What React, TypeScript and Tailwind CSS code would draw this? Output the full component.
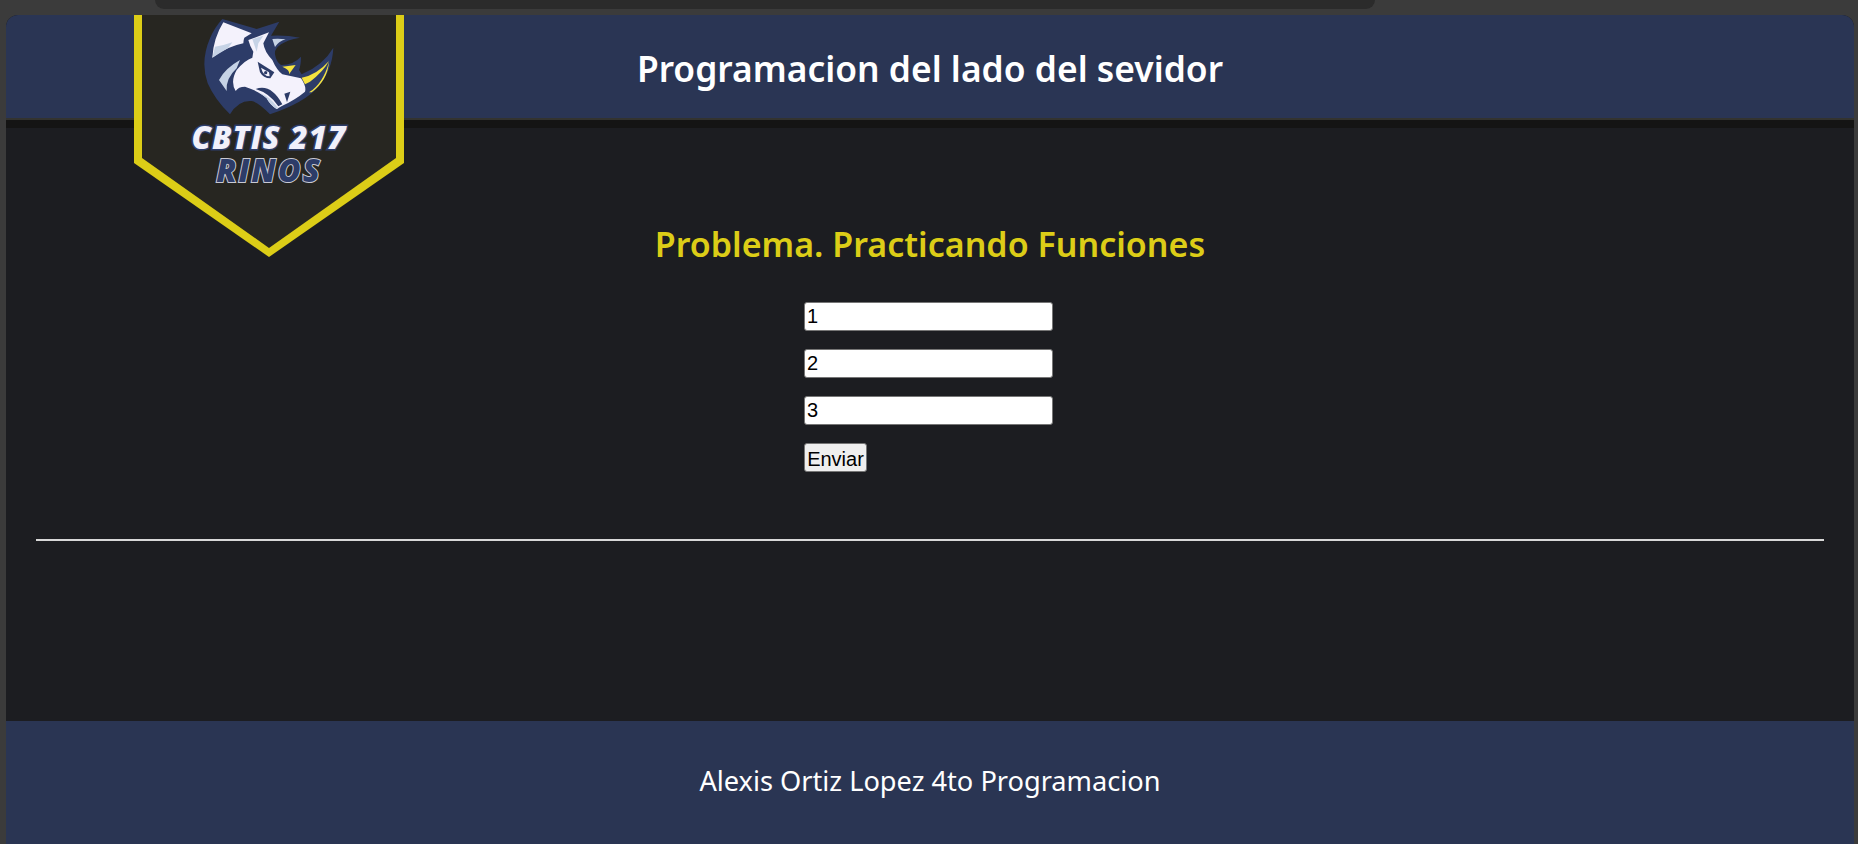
import React from 'react';

const titleFont = "font-['Noto_Sans',sans-serif]";

function Rhino() {
  return (
    <svg viewBox="0 0 450 315" className="absolute left-[61px] top-0 w-[150px] h-[105px]">
      <path
        fill="#2d3c68"
        d="M82 12 L185 42 L253 20 L228 62 Q275 60 315 68 Q275 75 258 88 Q238 100 240 118 Q244 142 258 150 Q295 150 318 125 Q318 150 312 165 L320 178 Q385 150 415 98 Q412 165 370 215 Q330 262 225 298 Q190 262 170 258 Q130 255 105 298 Q60 255 38 205 Q15 140 45 70 Q58 38 82 12 Z"
      />
      {/* crest */}
      <path fill="#f4f2fc" d="M85 22 L170 55 L148 68 Q145 75 145 85 Q95 95 52 128 Q55 70 85 22 Z" />
      <path fill="#c6d3e6" d="M52 128 L60 95 Q85 92 112 82 L100 98 Z" />
      {/* face */}
      <path
        fill="#f4f2fc"
        d="M160 75 L222 52 L205 85 Q208 110 232 135 Q245 165 262 178 L318 190 Q335 215 330 230 Q300 255 262 272 L245 282 Q225 270 215 250 Q195 230 150 215 Q130 215 122 228 Q105 200 125 165 Q150 135 172 128 L175 110 Q165 95 160 75 Z"
      />
      <path fill="#c6d3e6" d="M172 72 L205 62 L190 85 L185 110 Q178 90 172 72 Z" />
      <path fill="#c6d3e6" d="M135 135 Q90 160 72 195 L95 228 Q92 190 125 160 Z" />
      <path fill="#c6d3e6" d="M232 72 Q252 70 272 73 Q250 80 240 96 Z" />
      <path fill="#c6d3e6" d="M190 232 Q215 240 235 262 L250 280 L245 282 Q225 270 215 250 Q204 240 190 232 Z" />
      <path fill="#2d3c68" d="M182 222 Q228 205 262 268 L250 274 Q225 235 182 222 Z" />
      {/* small horn + big horn */}
      <path fill="#f5e33f" d="M262 155 L302 150 L282 178 Q286 165 262 155 Z" />
      <path fill="#f5e33f" d="M320 188 Q365 180 402 138 Q385 170 345 200 L330 208 Z" />
      <path fill="#f5e33f" d="M342 232 Q385 205 402 140 Q398 195 350 232 Z" />
      {/* eye */}
      <path fill="#2d3c68" d="M188 140 L238 172 L226 190 Q205 190 195 172 Z" />
      <path fill="#f4f2fc" d="M198 158 L222 172 L224 184 Q205 184 198 158 Z" />
      <circle cx="212" cy="173" r="5" fill="#2d3c68" />
      {/* nostril */}
      <path fill="#2d3c68" d="M268 236 L286 230 L276 262 Z" />
    </svg>
  );
}

function Logo() {
  return (
    <div className="absolute left-[128px] top-0 w-[270px] h-[242px]">
      <svg viewBox="0 0 270 242" className="absolute inset-0 w-[270px] h-[242px]">
        <polygon fill="#dccd17" points="0,0 270,0 270,148 135,242 0,148" />
        <polygon fill="#272621" points="8,0 262,0 262,143 135,233 8,143" />
      </svg>
      <Rhino />
      <div className="absolute left-0 top-[109px] w-full text-center font-['Open_Sans',sans-serif] italic font-extrabold text-[31px] leading-[26px] tracking-[1px] text-[#f1f0fa] [-webkit-text-stroke:3px_#2d3c68] [paint-order:stroke_fill]">
        CBTIS 217
      </div>
      <div className="absolute left-0 top-[142px] w-full text-center font-['Open_Sans',sans-serif] italic font-extrabold text-[31px] leading-[26px] tracking-[2px] text-[#2d3c68] [-webkit-text-stroke:2px_#c9c9d2] [paint-order:stroke_fill]">
        RINOS
      </div>
    </div>
  );
}

export default function App() {
  const values = ['1', '2', '3'];

  return (
    <div className="h-[844px] bg-[#3b3b3b] pl-[6px] pr-[4px] flex flex-col overflow-hidden">
      <div className="h-[15px] shrink-0 pl-[149px] pr-[479px]">
        <div className="h-[9px] bg-[#2b2b2b] rounded-b-[14px]"></div>
      </div>

      <header className="relative shrink-0 h-[113px] bg-[#141414] rounded-t-[12px]">
        <div className="h-[105px] bg-[#2a3554] border-b-2 border-[#33332f] rounded-t-[12px] flex justify-center pt-[30px]">
          <h1 className={`${titleFont} text-white font-semibold text-[35.4px] leading-[46px]`}>
            Programacion del lado del sevidor
          </h1>
        </div>
        <Logo />
      </header>

      <main className="flex-1 bg-[#1c1d21] px-[30px] pt-[94px]">
        <h2 className={`${titleFont} text-center text-[#dccd17] font-semibold text-[34px] leading-[44px]`}>
          Problema. Practicando Funciones
        </h2>
        <form className="w-[252px] mx-auto mt-[36px] flex flex-col items-start gap-[18px] font-['Liberation_Sans',Arial,sans-serif] text-[20px] text-black">
          {values.map((value) => (
            <input
              key={value}
              type="text"
              defaultValue={value}
              className="w-[249px] h-[29px] bg-white border border-[#767676] rounded-[3px] px-[2px] pb-[2px]"
            />
          ))}
          <button
            type="button"
            className="w-[63px] h-[29px] bg-[#efefef] border border-[#767676] rounded-[3px] pb-[2px]"
          >
            Enviar
          </button>
        </form>
        <hr className="mt-[67px] border-0 border-t-2 border-[#d8d8d8]" />
      </main>

      <footer className="shrink-0 h-[123px] bg-[#2a3553] flex justify-center pt-[44px]">
        <p className={`${titleFont} text-white text-[27.2px] leading-[32px]`}>
          Alexis Ortiz Lopez 4to Programacion
        </p>
      </footer>
    </div>
  );
}
